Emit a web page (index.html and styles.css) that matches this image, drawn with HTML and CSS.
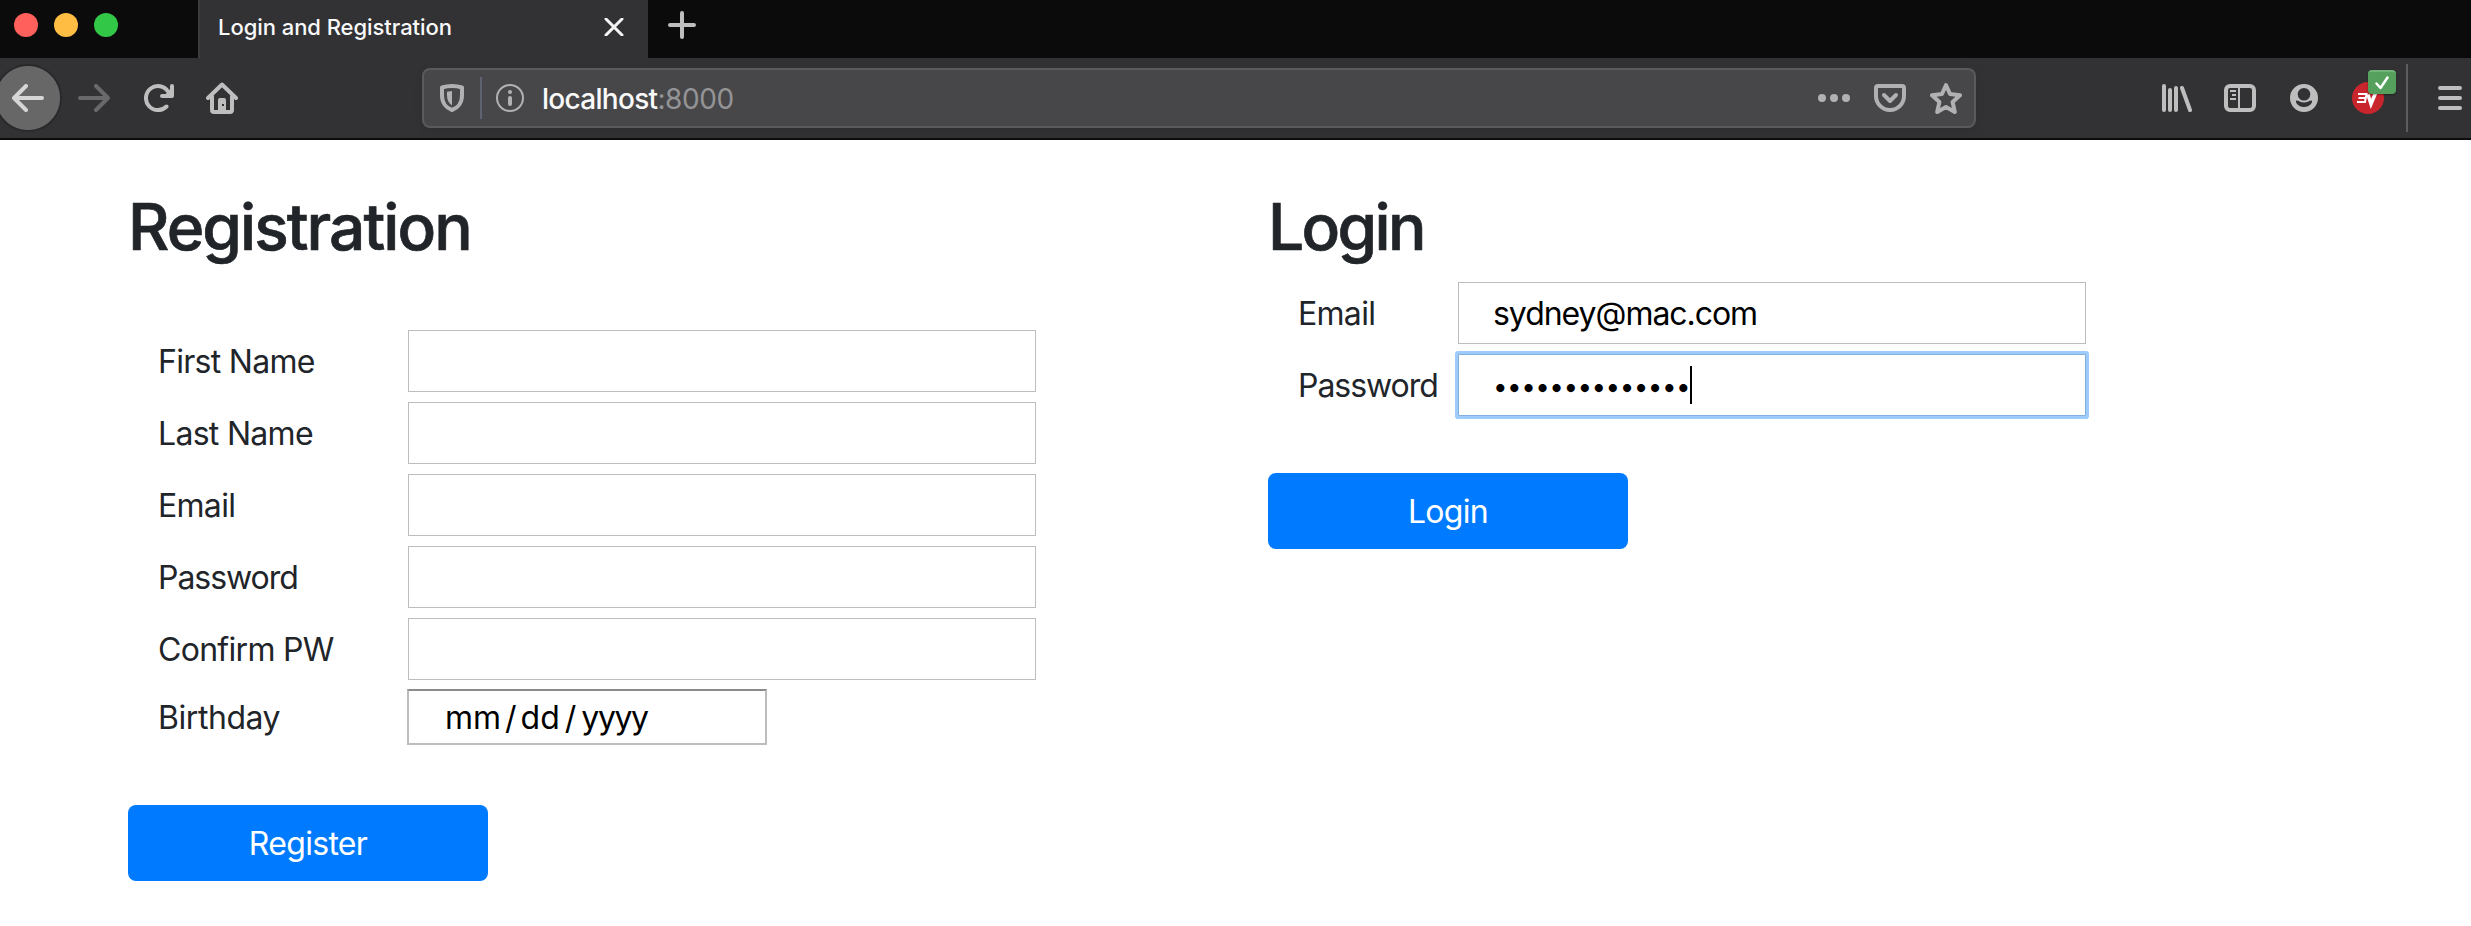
FILE: index.html
```html
<!DOCTYPE html>
<html lang="en">
<head>
<meta charset="utf-8">
<title>Login and Registration</title>
<link rel="stylesheet" href="styles.css">
</head>
<body>
<header class="browser">
  <div class="tabs">
    <div class="lights"><i class="light red"></i><i class="light yellow"></i><i class="light green"></i></div>
    <div class="tab">
      <span class="tab-title">Login and Registration</span>
      <svg class="close" width="20" height="18" viewBox="0 0 20 18"><path d="M2 1l16 16M18 1L2 17"/></svg>
    </div>
    <svg class="plus" width="28" height="28" viewBox="0 0 28 28"><path d="M14 2v24M2 14h24"/></svg>
  </div>
  <div class="toolbar">
    <div class="nav">
      <span class="back"><svg width="32" height="28" viewBox="0 0 32 28"><path d="M30 14H3M14 2L2 14l12 12"/></svg></span>
      <svg class="forward" width="32" height="28" viewBox="0 0 32 28"><path d="M2 14h27M18 2l12 12-12 12"/></svg>
      <svg class="reload" width="30" height="28" viewBox="0 0 30 28"><path d="M22.500 22.500A12 12 0 1 1 24 7.500"/><path d="M28 2v10H18"/><path class="fill" d="M28 3v10h-9z"/></svg>
      <svg class="home" width="32" height="32" viewBox="0 0 32 32"><path d="M2 16L16 2.500 30 16M6 14v14a2 2 0 0 0 2 2h16a2 2 0 0 0 2-2V14"/><path class="fill" fill-rule="evenodd" d="M12 30V18a2 2 0 0 1 2-2h4a2 2 0 0 1 2 2v12zM16 22v2h2v-2z"/></svg>
    </div>
    <div class="urlbar">
      <svg class="shield" width="24" height="28" viewBox="0 0 24 28"><path d="M2 3.500Q12 .5 22 3.500v8c0 7-4 12.500-10 14.500C6 24 2 18.500 2 11.500z"/><path class="fill" d="M7 7.800l5-.8v14.500c-3-2-5-5.500-5-10z"/></svg>
      <i class="split"></i>
      <svg class="info" width="28" height="28" viewBox="0 0 28 28"><circle cx="14" cy="14" r="13"/><circle class="fill" cx="14" cy="8" r="2"/><path class="stem" d="M14 14v6"/></svg>
      <span class="url"><span class="host">localhost</span><span class="port">:8000</span></span>
      <div class="actions">
        <svg width="32" height="8" viewBox="0 0 32 8"><circle class="fill" cx="4" cy="4" r="4"/><circle class="fill" cx="16" cy="4" r="4"/><circle class="fill" cx="28" cy="4" r="4"/></svg>
        <svg width="32" height="28" viewBox="0 0 32 28"><path d="M4 2h24a2 2 0 0 1 2 2v8a14 14 0 0 1-28 0V4a2 2 0 0 1 2-2z"/><path d="M10 11l6 6 6-6"/></svg>
        <svg width="32" height="32" viewBox="0 0 32 32"><path d="M16 3l4 9 10 1.200-7.400 6.800 2.200 10L16 25l-8.800 5 2.200-10L2 13.200 12 12z"/></svg>
      </div>
    </div>
    <div class="tools">
      <svg width="30" height="28" viewBox="0 0 30 28"><path d="M2 2v24M8 6v20M14 4v22M20 4l8 22"/></svg>
      <svg width="32" height="28" viewBox="0 0 32 28"><rect x="2" y="2" width="28" height="24" rx="4"/><path class="thin" d="M15 4v20M6 7h6M8 11h4M6 15h6"/></svg>
      <svg width="28" height="28" viewBox="0 0 28 28"><path class="fill" fill-rule="evenodd" d="M14 0a14 14 0 1 0 0 28 14 14 0 0 0 0-28zM14 4a6.300 6.300 0 1 1 0 12.600A6.300 6.300 0 0 1 14 4zM6.500 16.500c2 0 4 2 7.500 2s5.500-2 7.500-2c2 1.200-1.500 6.500-7.500 6.500S4.500 17.700 6.500 16.500z"/></svg>
      <span class="ext">
        <svg width="32" height="32" viewBox="0 0 32 32"><circle class="disc" cx="16" cy="16" r="16"/><path class="mark" d="M6 12h8.500L13 20H5M6.500 16H13"/><path class="mark bold" d="M16 12.500l3 9.500 5-12"/></svg>
        <span class="badge"><svg width="14" height="14" viewBox="0 0 14 14"><path d="M1.500 7.500l4 4.500 7-10.500"/></svg></span>
      </span>
      <i class="bar"></i>
      <svg width="24" height="24" viewBox="0 0 24 24"><path d="M2 2h20M2 12h20M2 22h20"/></svg>
    </div>
  </div>
</header>
<main class="page">
  <section class="col">
    <h2 class="title">Registration</h2>
    <form class="form register">
      <div class="row"><label>First Name</label><input class="field" type="text"></div>
      <div class="row"><label>Last Name</label><input class="field" type="text"></div>
      <div class="row"><label>Email</label><input class="field" type="text"></div>
      <div class="row"><label class="tight">Password</label><input class="field" type="password"></div>
      <div class="row"><label>Confirm PW</label><input class="field" type="password"></div>
      <div class="row short"><label class="loose">Birthday</label><div class="date"><span>mm</span><span class="slash">/</span><span>dd</span><span class="slash wide">/</span><span class="year">yyyy</span></div></div>
      <button class="btn" type="button">Register</button>
    </form>
  </section>
  <section class="col">
    <h2 class="title narrow">Login</h2>
    <form class="form login">
      <div class="row"><label>Email</label><div class="field"><span class="mail">sydney@mac.com</span></div></div>
      <div class="row"><label class="tight">Password</label><div class="field focus"><span class="dots">••••••••••••••</span><i class="caret"></i></div></div>
      <button class="btn" type="button">Login</button>
    </form>
  </section>
</main>
</body>
</html>
```
FILE: styles.css
```css
* { box-sizing: border-box; }
body { margin: 0; width: 2471px; height: 926px; overflow: hidden; background: #fff; color: #212529; font-family: Inter, "Liberation Sans", sans-serif; font-size: 32px; }
svg { display: block; flex: none; fill: none; stroke: #bebebf; stroke-width: 4; stroke-linecap: round; stroke-linejoin: round; }
svg .fill { fill: #bebebf; stroke: none; }
.browser { height: 140px; background: #323234; border-bottom: 2px solid #0c0c0d; }
.tabs { display: flex; align-items: flex-start; height: 58px; background: #0b0b0b; }
.lights { display: flex; gap: 16px; width: 198px; padding: 13px 0 0 14px; }
.light { width: 24px; height: 24px; border-radius: 50%; }
.red { background: #ff605c; }
.yellow { background: #ffbd44; }
.green { background: #33c748; }
.tab { display: flex; align-items: center; justify-content: space-between; width: 450px; height: 58px; padding: 0 24px 5px 18px; background: #323234; border-left: 2px solid #3c3c3e; }
.tab-title { padding-top: 1px; font-size: 22px; font-weight: 500; letter-spacing: -.05px; color: #f9f9fa; }
.close { stroke: #f4f4f5; stroke-width: 3; }
.plus { margin: 11px 0 0 20px; }
.toolbar { display: flex; align-items: center; height: 80px; }
.nav { display: flex; align-items: center; width: 422px; }
.back { display: flex; align-items: center; justify-content: flex-end; width: 64px; height: 70px; padding-right: 20px; background: radial-gradient(circle at 28px 35px, #676767 31.5px, #29292b 32.5px, #29292b 33.5px, transparent 34.5px); }
.back svg { stroke: #d6d6d7; }
.forward { margin-left: 14px; stroke: #69696b; }
.reload { margin-left: 34px; }
.home { margin-left: 32px; }
.urlbar { display: flex; align-items: center; width: 1554px; height: 60px; padding: 0 12px 0 16px; background: #474749; border: 2px solid #5a5a5c; border-radius: 8px; box-shadow: 0 2px 8px rgba(0, 0, 0, .1); }
.urlbar svg { stroke: #b1b1b3; }
.urlbar svg .fill { fill: #b1b1b3; stroke: none; }
.split { width: 2px; height: 42px; margin: 0 14px 0 16px; background: #5f6270; }
.urlbar .info { stroke-width: 2; }
.urlbar .stem { stroke-width: 4; }
.url { margin-left: 18px; padding-top: 2px; font-size: 28px; letter-spacing: -.7px; color: #f9f9fa; }
.host { font-weight: 500; }
.port { color: #949496; letter-spacing: -.4px; }
.actions { display: flex; align-items: center; gap: 24px; margin-left: auto; }
.tools { display: flex; align-items: center; margin-left: 186px; gap: 32px; }
.tools > svg:nth-child(2) { margin-right: 2px; }
.thin { stroke-width: 2; stroke-linecap: butt; }
.ext { position: relative; margin-left: 2px; }
.disc { fill: #c9252d; stroke: none; }
.mark { stroke: #fff; stroke-width: 2; stroke-linecap: butt; stroke-linejoin: miter; }
.bold { stroke-width: 3.500; }
.badge { position: absolute; left: 16px; top: -12px; display: flex; align-items: center; justify-content: center; width: 28px; height: 24px; border-radius: 4px; background: #54a05c; border-top: 2px solid #72b47a; box-shadow: 0 1px 2px rgba(0, 0, 0, .35); }
.badge svg { stroke: #fff; stroke-width: 2.500; }
.bar { width: 2px; height: 68px; margin: 0 -2px 0 -10px; background: #5c5c5e; }
.page { display: grid; grid-template-columns: 1140px 1fr; padding: 48px 0 0 128px; }
.title { margin: 0; font-size: 64px; line-height: 78px; height: 77px; font-weight: 500; letter-spacing: -1.950px; -webkit-text-stroke: .7px #212529; }
.narrow { letter-spacing: -2.650px; }
.form { display: flex; flex-direction: column; align-items: flex-start; margin: 0; }
.register { padding-top: 60px; }
.login { padding-top: 12px; }
.row { display: grid; grid-template-columns: 250px auto; align-items: center; height: 72px; padding-left: 30px; letter-spacing: -.7px; }
.login .row { grid-template-columns: 160px auto; }
.short { height: 64px; }
.tight { letter-spacing: -1.050px; }
.loose { letter-spacing: -.45px; }
.field { display: flex; align-items: center; width: 628px; height: 62px; padding: 0 0 0 34px; border: 1px solid #bdbdbd; border-radius: 0; background: #fff; color: #000; font: inherit; }
.focus { border-color: #7fb0df; border-radius: 1px; box-shadow: 0 0 0 3px #9ecbfb; }
.mail { letter-spacing: -1.040px; }
.dots { padding-top: 2px; font-size: 26px; letter-spacing: -.55px; }
.caret { width: 2px; height: 38px; background: #000; }
.date { display: flex; align-items: center; width: 360px; height: 56px; margin-left: -1px; padding-left: 36px; border: 2px solid #bdbdbd; border-top-color: #8c8c8c; color: #000; letter-spacing: 0; }
.slash { margin: 0 4px; }
.wide { margin: 0 5px; }
.year { letter-spacing: -1.400px; }
.btn { width: 360px; height: 76px; margin-top: 56px; padding: 0; border: 0; border-radius: 8px; background: #007bff; color: #fff; font: inherit; letter-spacing: -.7px; }
.login .btn { margin-top: 52px; }
```
